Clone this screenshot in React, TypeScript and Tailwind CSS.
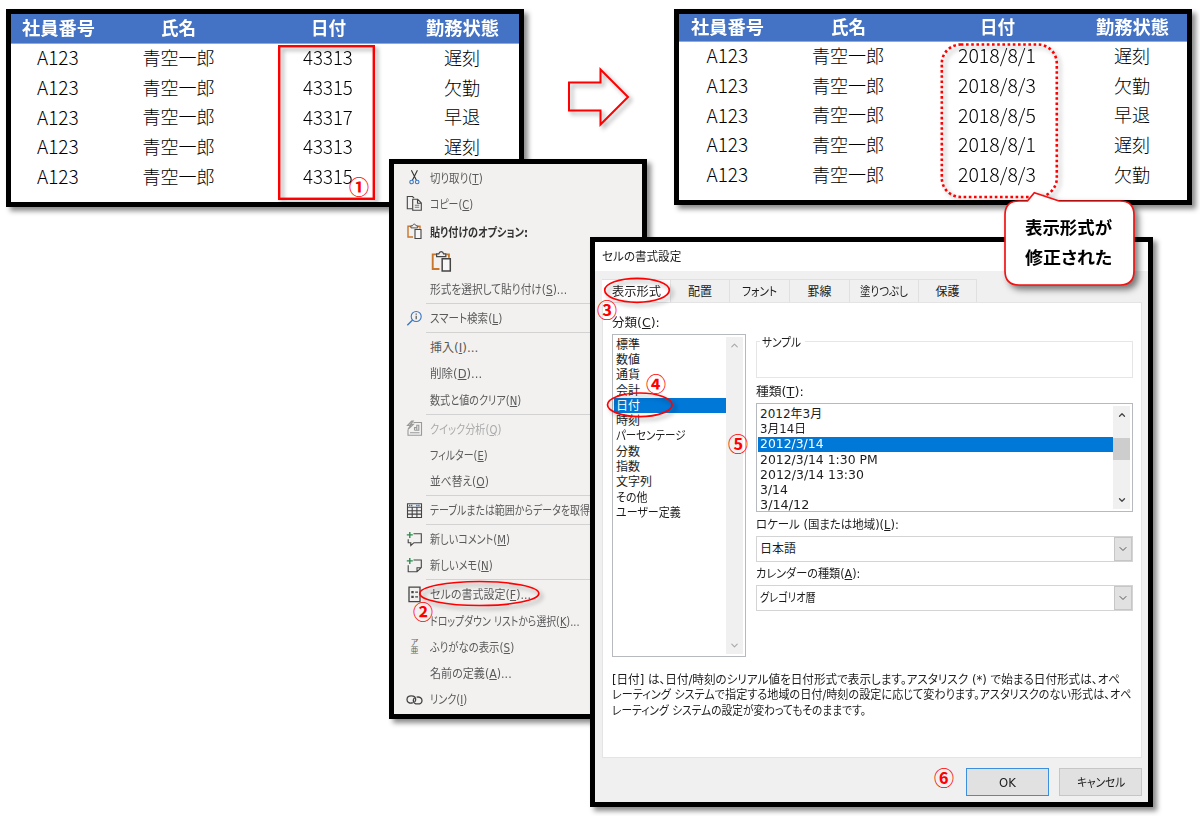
import { ReactNode, useLayoutEffect, useRef } from "react";
import { ChevronDown, ChevronUp } from "lucide-react";

// one line of text squeezed or stretched to a given width
const Fit = ({ w, className = "", children }: { w: number; className?: string; children: ReactNode }) => {
  const ref = useRef<HTMLSpanElement>(null);

  useLayoutEffect(() => {
    const el = ref.current;
    if (!el) return;
    el.style.transform = "scaleX(" + w / el.offsetWidth + ")";
  }, [w]);

  return (
    <span className="inline-flex shrink-0" style={{ width: w }}>
      <span ref={ref} className={"inline-block shrink-0 origin-left whitespace-pre " + className}>
        {children}
      </span>
    </span>
  );
};

// "&" marks the shortcut letter
const accel = (text: string) => {
  const i = text.indexOf("&");
  if (i < 0) return text;
  return (
    <>
      {text.slice(0, i)}
      <u className="underline-offset-1">{text[i + 1]}</u>
      {text.slice(i + 2)}
    </>
  );
};

const heads: [string, number][] = [["社員番号", 73], ["氏名", 35], ["日付", 35], ["勤務状態", 73]];

type SheetProps = { dates: string[]; states: string[]; dateW: number; cols: string; header: string };

const Sheet = ({ dates, states, dateW, cols, header }: SheetProps) => (
  <div className="h-full w-full overflow-hidden bg-white font-['Noto_Sans_CJK_JP',sans-serif] text-[18px] leading-none">
    <div className={"grid items-center border-b border-[#8ea9db] bg-[#4472c4] pb-[3px] font-bold text-white " + cols + " " + header}>
      {heads.map(([t, w]) => (
        <div key={t} className="flex justify-center"><Fit w={w}>{t}</Fit></div>
      ))}
    </div>
    {dates.map((d, i) => (
      <div key={i} className={"grid h-[29.7px] items-center pb-[4px] font-light text-black " + cols}>
        <div className="flex justify-center"><Fit w={42} className="text-[19px]">A123</Fit></div>
        <div className="flex justify-center"><Fit w={72}>青空一郎</Fit></div>
        <div className="flex justify-center"><Fit w={dateW} className="text-[19px]">{d}</Fit></div>
        <div className="flex justify-center">{states[i] && <Fit w={36}>{states[i]}</Fit>}</div>
      </div>
    ))}
  </div>
);

const Svg = ({ children, size = 17 }: { children: ReactNode; size?: number }) => (
  <svg width={size} height={size} viewBox="0 0 17 17" fill="none" stroke="#444" strokeWidth="1.1">
    {children}
  </svg>
);

const Clipboard = ({ size }: { size?: number }) => (
  <Svg size={size}>
    <path d="M7 14H2V3.2h3M12 3.2h2v2.6" stroke="#c8762b" strokeWidth="1.4" />
    <path d="M4.9 4.9V2.8h1.6C7 .6 9.6.6 10 2.8h1.7v2.1z" fill="#f2f1f0" strokeWidth="0.9" />
    <path d="M9 6.5h6v9H9z" fill="#f7f7f7" />
  </Svg>
);

const icons: Record<string, ReactNode> = {
  cut: (
    <Svg>
      <path d="M5.4 1.2l5 10M11.4 1.2l-5 10" stroke="#333" />
      <circle cx="5.6" cy="13" r="1.8" stroke="#3b78c3" />
      <circle cx="11.2" cy="13" r="1.8" stroke="#3b78c3" />
    </Svg>
  ),
  copy: (
    <Svg>
      <path d="M6 13.8H1.3V1.5h5.2l1.6 1.6" />
      <path d="M6.7 4.3h5l3.6 3.6v7.4H6.7zM11.5 4.5v3.7h3.6" />
      <path d="M8.8 10.2h4.4M8.8 12.2h4.4" stroke="#777" />
    </Svg>
  ),
  paste: <Clipboard />,
  search: (
    <Svg>
      <circle cx="10.2" cy="6.5" r="5" stroke="#3b78c3" />
      <path d="M6.6 10L1.3 15.2" stroke="#3b78c3" strokeWidth="1.4" />
      <path d="M10.2 5.8v3.4M10.2 3.6v1.2" stroke="#555" strokeWidth="1.2" />
    </Svg>
  ),
  analysis: (
    <Svg>
      <g stroke="#999">
        <path d="M7.5 2.5h8v12.8H2V10M4 12.7h9.5" />
        <path d="M8.5 10.3h4.3V5.2h-2v5M8.5 10.3V7.6h2.3" />
        <path d="M5.8 1L1.5 5.5h3L1.8 9.5l5.6-5.1H4.5L7.2 1z" fill="#f2f1f0" />
      </g>
    </Svg>
  ),
  table: (
    <Svg>
      <path d="M1.5 1.7h14v13.8h-14zM1.5 5.3h14M1.5 8.8h14M1.5 12.1h14M6.2 5.3v10.2M10.9 5.3v10.2" />
      <path d="M3 3.5h3.4M10.2 3.5h3.4" stroke="#2f6fc0" strokeWidth="1.5" strokeDasharray="1.4 .6" />
    </Svg>
  ),
  comment: (
    <Svg>
      <path d="M7.5 2.7h7.8v9H8l-3.2 2.8v-2.8H2.2V8.2" />
      <path d="M3.8.9v6M.8 3.9h6" stroke="#2e8b4f" strokeWidth="1.4" />
    </Svg>
  ),
  memo: (
    <Svg>
      <path d="M7.5 3h7.8v7.5L11 14.8H2.2V8.2M15.1 10.7H11v3.9" />
      <path d="M3.8.9v6M.8 3.9h6" stroke="#2e8b4f" strokeWidth="1.4" />
    </Svg>
  ),
  format: (
    <Svg>
      <path d="M3 1.2h11v14.5H3z" strokeWidth="1.3" />
      <path d="M5.3 6.2h2.4M5.3 10.8h2.4" strokeWidth="2.2" />
      <path d="M9.2 6.2H12M9.2 10.8H12" strokeWidth="1.2" />
    </Svg>
  ),
  ruby: (
    <span className="flex flex-col items-center text-[8px] leading-[8px] text-[#666]">
      <span>ア</span>
      <span>亜</span>
    </span>
  ),
  link: (
    <Svg>
      <path d="M6.8 11.6C4 13 1 11.4 1 8.7 1 6.3 3 4.9 5.2 4.9c2.6 0 4.5 1.6 4.5 3.7 0 1-.5 1.9-1.2 2.4" strokeWidth="1.3" />
      <path d="M10.6 6.2c3-.7 5.4.8 5.4 3.2 0 2.2-1.9 3.5-4.1 3.5-2.6 0-4.6-1.5-4.6-3.5 0-1.2.6-2 1.3-2.6" strokeWidth="1.3" />
    </Svg>
  ),
};

type MenuItem = { text: string; w: number; icon?: string; kind?: "bold" | "off" } | "sep" | "paste";

const menu: MenuItem[] = [
  { text: "切り取り(&T)", w: 53, icon: "cut" },
  { text: "コピー(&C)", w: 43, icon: "copy" },
  { text: "貼り付けのオプション:", w: 98, icon: "paste", kind: "bold" },
  "paste",
  { text: "形式を選択して貼り付け(&S)...", w: 137 },
  "sep",
  { text: "スマート検索(&L)", w: 72, icon: "search" },
  "sep",
  { text: "挿入(&I)...", w: 48 },
  { text: "削除(&D)...", w: 52 },
  { text: "数式と値のクリア(&N)", w: 91 },
  "sep",
  { text: "クイック分析(&Q)", w: 71, icon: "analysis", kind: "off" },
  { text: "フィルター(&E)", w: 58 },
  { text: "並べ替え(&O)", w: 59 },
  "sep",
  { text: "テーブルまたは範囲からデータを取得", w: 160, icon: "table" },
  "sep",
  { text: "新しいコメント(&M)", w: 80, icon: "comment" },
  { text: "新しいメモ(&N)", w: 63, icon: "memo" },
  "sep",
  { text: "セルの書式設定(&F)...", w: 101, icon: "format" },
  { text: "ドロップダウン リストから選択(&K)...", w: 150 },
  { text: "ふりがなの表示(&S)", w: 84, icon: "ruby" },
  { text: "名前の定義(&A)...", w: 82 },
  { text: "リンク(&I)", w: 37, icon: "link" },
];

const ContextMenu = () => (
  <div className="flex h-full flex-col bg-[#f2f1f0] pt-[0.5px] text-[#5a5a5a]">
    {menu.map((m, i) => {
      if (m === "sep")
        return (
          <div key={i} className="flex h-[2.75px] shrink-0 items-center pl-8">
            <div className="h-px w-full bg-[#d2d2d2]" />
          </div>
        );
      if (m === "paste")
        return (
          <div key={i} className="flex h-[30px] shrink-0 items-center pl-[36px]">
            <Clipboard size={23} />
          </div>
        );
      return (
        <div
          key={i}
          className={
            "flex shrink-0 items-center pl-3 " +
            (m.kind === "bold" ? "h-[29px] font-bold text-[#333]" : "h-[26.25px]") +
            (m.kind === "off" ? " text-[#aaa]" : "")
          }
        >
          <div className="flex w-6 shrink-0">
            <div className="flex w-[17px] justify-center">{m.icon && icons[m.icon]}</div>
          </div>
          <div className="flex pt-0.5"><Fit w={m.w}>{accel(m.text)}</Fit></div>
        </div>
      );
    })}
  </div>
);

const tabs: [string, number, string][] = [
  ["表示形式", 49, "w-[69px] bg-white"],
  ["配置", 24, "w-[59px]"],
  ["フォント", 35, "w-[60px]"],
  ["罫線", 24, "w-[60px]"],
  ["塗りつぶし", 48, "w-[69px]"],
  ["保護", 24, "w-[58px]"],
];

const categories: [string, number][] = [
  ["標準", 24], ["数値", 24], ["通貨", 24], ["会計", 24], ["日付", 24], ["時刻", 24], ["パーセンテージ", 69],
  ["分数", 24], ["指数", 24], ["文字列", 36], ["その他", 31], ["ユーザー定義", 65],
];

const types: [string, number][] = [
  ["2012年3月", 62], ["3月14日", 46], ["2012/3/14", 64], ["2012/3/14 1:30 PM", 118],
  ["2012/3/14 13:30", 104], ["3/14", 28], ["3/14/12", 49],
];

const ListItems = ({ items, active }: { items: [string, number][]; active: number }) => (
  <div className="flex flex-1 flex-col">
    {items.map(([t, w], i) => (
      <div key={t} className={"flex h-[15.3px] shrink-0 items-center pl-0.5 " + (i === active ? "bg-[#0078d7] text-white" : "")}>
        <Fit w={w}>{t}</Fit>
      </div>
    ))}
  </div>
);

const Combo = ({ value, w }: { value: string; w: number }) => (
  <div className="flex h-[26px] items-center border border-[#d4d4d4] pl-[3px]">
    <div className="flex flex-1"><Fit w={w}>{value}</Fit></div>
    <div className="flex h-full w-[18px] items-center justify-center border border-[#c6c6c6] bg-[#e1e1e1]">
      <ChevronDown size={12} strokeWidth={2} color="#555" />
    </div>
  </div>
);

const FormatDialog = () => (
  <div className="flex h-full flex-col bg-[#f0f0f0] text-[#1c1c1c]">
    <div className="flex h-[29px] shrink-0 items-center bg-white pt-px pl-[7px]"><Fit w={79}>セルの書式設定</Fit></div>
    <div className="mt-2 flex h-[23px] shrink-0 items-stretch pl-[7px]">
      {tabs.map(([t, w, cls]) => (
        <div key={t} className={"flex items-center justify-center border-t border-r border-[#e0e0e0] pt-0.5 " + cls}>
          <Fit w={w}>{t}</Fit>
        </div>
      ))}
    </div>
    <div className="ml-[7px] flex h-[456px] w-[540px] shrink-0 flex-col border border-[#e4e4e4] bg-white pl-[9px]">
      <div className="flex h-[354px] gap-[10px]">
        <div className="w-[134px]">
          <div className="flex h-[31px] items-center pt-[9px]"><Fit w={48}>{accel("分類(&C):")}</Fit></div>
          <div className="flex h-[323px] border border-[#b6babf] p-[2px] pl-px">
            <ListItems items={categories} active={4} />
            <div className="flex w-[17px] flex-col items-center justify-between bg-[#f0f0f0] py-[3px]">
              <ChevronUp size={11} strokeWidth={2.4} color="#a8a8a8" />
              <ChevronDown size={11} strokeWidth={2.4} color="#a8a8a8" />
            </div>
          </div>
        </div>
        <div className="w-[377px]">
          <div className="mt-[38px] h-[37px] border border-[#e6e6e6]">
            <div className="ml-[3px] -mt-[8px] flex h-[18px] w-[45px] items-center bg-white pl-0.5"><Fit w={39}>サンプル</Fit></div>
          </div>
          <div className="flex h-[25px] items-center pt-[3px]"><Fit w={48}>{accel("種類(&T):")}</Fit></div>
          <div className="flex h-[109px] overflow-hidden border border-[#b6babf] p-[2px] pl-px">
            <ListItems items={types} active={2} />
            <div className="flex w-[17px] flex-col items-center bg-[#f0f0f0] py-1">
              <ChevronUp size={10} strokeWidth={3} color="#444" />
              <div className="mt-[18px] h-[22px] w-full shrink-0 bg-[#cdcdcd]" />
              <ChevronDown className="mt-auto" size={10} strokeWidth={3} color="#444" />
            </div>
          </div>
          <div className="flex h-6 items-center pt-0.5"><Fit w={143}>{accel("ロケール (国または地域)(&L):")}</Fit></div>
          <Combo value="日本語" w={36} />
          <div className="flex h-[23px] items-center"><Fit w={104}>{accel("カレンダーの種類(&A):")}</Fit></div>
          <Combo value="グレゴリオ暦" w={56} />
        </div>
      </div>
      <div className="mt-[15px] flex flex-col">
        <div className="flex h-[15.5px] items-center"><Fit w={508}>[日付] は、日付/時刻のシリアル値を日付形式で表示します。アスタリスク (*) で始まる日付形式は、オペ</Fit></div>
        <div className="flex h-[15.5px] items-center"><Fit w={519}>レーティング システムで指定する地域の日付/時刻の設定に応じて変わります。アスタリスクのない形式は、オペ</Fit></div>
        <div className="flex h-[15.5px] items-center"><Fit w={254}>レーティング システムの設定が変わってもそのままです。</Fit></div>
      </div>
    </div>
    <div className="mt-[10px] flex justify-end gap-[10px] pr-[6px]">
      <button className="flex h-7 w-[83px] items-center justify-center border-[1.5px] border-[#3c8fdc] bg-[#e1e1e1] pt-px"><Fit w={17} className="text-[13px]">OK</Fit></button>
      <button className="flex h-7 w-[83px] items-center justify-center border border-[#c6c6c6] bg-[#e1e1e1] pt-px"><Fit w={48}>キャンセル</Fit></button>
    </div>
  </div>
);

const Badge = ({ className, children }: { className: string; children: ReactNode }) => (
  <div className={"absolute flex size-5 items-center justify-center font-['Noto_Sans_CJK_JP',sans-serif] text-[20px] leading-none font-bold text-[#ff0000] " + className}>
    {children}
  </div>
);

const frame = "absolute border-[5px] border-black shadow-[4px_4px_5px_rgba(0,0,0,0.45)] ";

const App = () => {
  return (
    <div className="relative h-[816px] w-[1200px] overflow-hidden bg-white font-['DejaVu_Sans','Noto_Sans_CJK_JP',sans-serif] text-[12px] leading-none [font-feature-settings:'palt']">
      <div className={frame + "top-[9px] left-[6px] h-[198px] w-[518px]"}>
        <Sheet
          dates={["43313", "43315", "43317", "43313", "43315"]}
          states={["遅刻", "欠勤", "早退", "遅刻"]}
          dateW={50}
          cols="grid-cols-[94px_147px_152px_116px]"
          header="h-[30px]"
        />
      </div>
      <div className={frame + "top-[9px] left-[674px] h-[196px] w-[518px]"}>
        <Sheet
          dates={["2018/8/1", "2018/8/3", "2018/8/5", "2018/8/1", "2018/8/3"]}
          states={["遅刻", "欠勤", "早退", "遅刻", "欠勤"]}
          dateW={78}
          cols="grid-cols-[97px_144px_154px_116px]"
          header="h-[28px]"
        />
      </div>
      <div className={frame + "top-[159px] left-[389px] h-[560px] w-[258px]"}>
        <ContextMenu />
      </div>
      <div className={frame + "top-[237px] left-[590px] h-[570px] w-[563px]"}>
        <FormatDialog />
      </div>

      {/* red marks on top of the windows */}
      <svg className="absolute inset-0 drop-shadow-[3px_3px_2px_rgba(0,0,0,0.35)]" width="1200" height="816" fill="none" stroke="#ff0000" strokeWidth="2">
        <rect x="279.2" y="46.2" width="94.6" height="152.6" strokeWidth="2.4" />
        <path d="M569 82.5h31.5V69.5L628 97l-27.5 27.5v-14H569z" />
        <rect x="941.8" y="44.5" width="115" height="152.5" rx="19" strokeWidth="2.6" strokeDasharray="2.6 2.6" />
        <ellipse cx="479.3" cy="593.5" rx="59.5" ry="12" strokeWidth="1.7" />
        <ellipse cx="637" cy="290.3" rx="32.3" ry="12" strokeWidth="1.7" />
        <ellipse cx="639.8" cy="404.8" rx="32.3" ry="11.8" strokeWidth="1.7" />
      </svg>
      <svg className="absolute inset-0 drop-shadow-[4px_4px_3px_rgba(0,0,0,0.5)]" width="1200" height="816" fill="white" stroke="#f01414" strokeWidth="1.7">
        <path d="M1019 201h8.5l6.8-8.3L1059 201h61q14 0 14 14v56q0 14-14 14h-101q-14 0-14-14v-56q0-14 14-14z" />
      </svg>
      <div className="absolute top-[211px] left-[1004px] flex w-[129px] flex-col items-center font-['Noto_Sans_CJK_JP',sans-serif] text-[17px] font-bold text-black">
        <div className="flex h-[30px] items-center"><Fit w={87}>表示形式が</Fit></div>
        <div className="flex h-[30px] items-center"><Fit w={87}>修正された</Fit></div>
      </div>

      <Badge className="top-[177px] left-[349px]">①</Badge>
      <Badge className="top-[602px] left-[413px]">②</Badge>
      <Badge className="top-[300px] left-[597px]">③</Badge>
      <Badge className="top-[374px] left-[646px]">④</Badge>
      <Badge className="top-[434px] left-[728px]">⑤</Badge>
      <Badge className="top-[768px] left-[934px]">⑥</Badge>
    </div>
  );
};

export default App;
